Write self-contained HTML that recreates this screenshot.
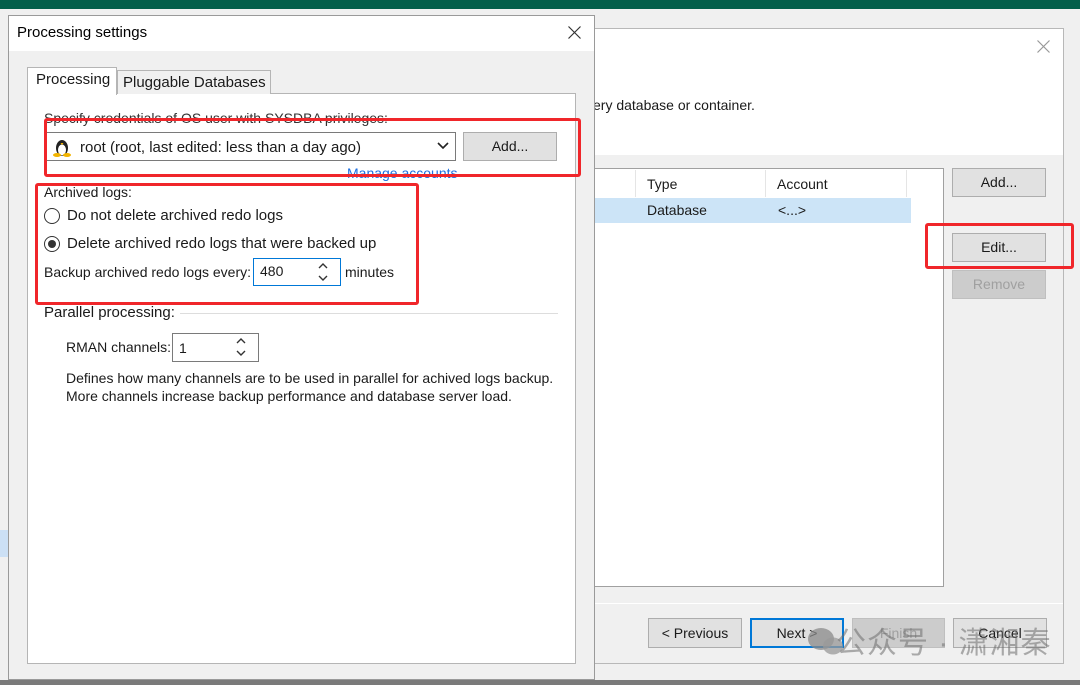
<!DOCTYPE html>
<html><head><meta charset="utf-8"><style>
*{margin:0;padding:0;box-sizing:border-box}
body{width:1080px;height:685px;overflow:hidden;background:#f0f0f0;font-family:"Liberation Sans","Noto Sans CJK SC",sans-serif;font-size:14px;color:#1a1a1a;position:relative}
.a{position:absolute;white-space:nowrap}
.btn{position:absolute;background:#e1e1e1;border:1px solid #adadad;text-align:center;font-size:14px}
.red{position:absolute;border:3px solid #f0262a;border-radius:3px}
</style></head><body>
<div class="a" style="left:0;top:0;width:1080px;height:9px;background:#035f4a"></div>
<div class="a" style="left:0;top:530px;width:8px;height:27px;background:#cce0f5"></div>
<!-- right wizard window -->
<div class="a" style="left:594px;top:28px;width:470px;height:636px;background:#f0f0f0;border:1px solid #b8b8b8"></div>
<div class="a" style="left:594px;top:29px;width:469px;height:126px;background:#fff"></div>
<svg class="a" style="left:1037px;top:40px" width="13" height="13"><path d="M0.5 0.5l12 12M12.5 0.5l-12 12" stroke="#999" stroke-width="1.2"/></svg>
<div class="a" style="left:593px;top:97px">ery database or container.</div>
<div class="a" style="left:594px;top:168px;width:350px;height:419px;background:#fff;border:1px solid #a0a0a0;border-left:none"></div>
<div class="a" style="left:635px;top:170px;width:1px;height:27px;background:#e5e5e5"></div>
<div class="a" style="left:765px;top:170px;width:1px;height:27px;background:#e5e5e5"></div>
<div class="a" style="left:906px;top:170px;width:1px;height:27px;background:#e5e5e5"></div>
<div class="a" style="left:647px;top:176px">Type</div>
<div class="a" style="left:777px;top:176px">Account</div>
<div class="a" style="left:594px;top:198px;width:317px;height:25px;background:#cce4f7"></div>
<div class="a" style="left:647px;top:202px">Database</div>
<div class="a" style="left:778px;top:202px">&lt;...&gt;</div>
<div class="btn" style="left:952px;top:168px;width:94px;height:29px;line-height:27px">Add...</div>
<div class="btn" style="left:952px;top:233px;width:94px;height:29px;line-height:27px">Edit...</div>
<div class="btn" style="left:952px;top:270px;width:94px;height:29px;line-height:27px;color:#a0a0a0;background:#ccc;border-color:#bfbfbf">Remove</div>
<div class="red" style="left:925px;top:223px;width:149px;height:46px"></div>
<div class="a" style="left:594px;top:603px;width:469px;height:1px;background:#fff"></div>
<div class="btn" style="left:648px;top:618px;width:94px;height:30px;line-height:28px">&lt; Previous</div>
<div class="btn" style="left:750px;top:618px;width:94px;height:30px;line-height:26px;border:2px solid #0078d7">Next &gt;</div>
<div class="btn" style="left:852px;top:618px;width:93px;height:30px;line-height:28px;color:#a0a0a0;background:#ccc;border-color:#bfbfbf">Finish</div>
<div class="btn" style="left:953px;top:618px;width:94px;height:30px;line-height:28px">Cancel</div>
<svg class="a" style="left:806px;top:624px" width="40" height="34"><ellipse cx="15" cy="15" rx="13" ry="11" fill="#8a8a8a" opacity=".75"/><ellipse cx="27" cy="22" rx="10" ry="8.5" fill="#9a9a9a" opacity=".75"/></svg>
<div class="a" style="left:836px;top:618px;font-size:30px;letter-spacing:1px;color:rgba(110,110,110,.55)">公众号 · 潇湘秦</div>
<div class="a" style="left:0;top:680px;width:1080px;height:5px;background:#7a7a7a"></div>
<!-- processing dialog -->
<div class="a" style="left:8px;top:15px;width:587px;height:665px;background:#f0f0f0;border:1px solid #9a9a9a"></div>
<div class="a" style="left:9px;top:16px;width:585px;height:35px;background:#fff"></div>
<div class="a" style="left:17px;top:24px;font-size:15px;color:#000">Processing settings</div>
<svg class="a" style="left:568px;top:26px" width="13" height="13"><path d="M0.5 0.5l12 12M12.5 0.5l-12 12" stroke="#333" stroke-width="1.2"/></svg>
<div class="a" style="left:27px;top:93px;width:549px;height:571px;background:#fff;border:1px solid #b5b5b5"></div>
<div class="a" style="left:117px;top:70px;width:154px;height:24px;background:#f0f0f0;border:1px solid #b5b5b5;border-bottom:none;font-size:15px;padding:3px 0 0 5px">Pluggable Databases</div>
<div class="a" style="left:27px;top:67px;width:90px;height:28px;background:#fff;border:1px solid #b5b5b5;border-bottom:none;font-size:15px;padding:3px 0 0 8px">Processing</div>
<div class="a" style="left:44px;top:110px;color:#333">Specify credentials of OS user with SYSDBA privileges:</div>
<div class="a" style="left:46px;top:132px;width:410px;height:29px;background:#fff;border:1px solid #7a7a7a"></div>
<svg class="a" style="left:53px;top:137px" width="18" height="20"><ellipse cx="9" cy="11" rx="6" ry="8" fill="#222"/><ellipse cx="9" cy="13" rx="4" ry="5.5" fill="#fff"/><ellipse cx="4" cy="18" rx="4" ry="2" fill="#f2b400"/><ellipse cx="14" cy="18" rx="4" ry="2" fill="#f2b400"/><path d="M7.5 6h3l-1.5 2z" fill="#f2b400"/></svg>
<div class="a" style="left:80px;top:139px;font-size:15px">root (root, last edited: less than a day ago)</div>
<svg class="a" style="left:437px;top:142px" width="12" height="8"><path d="M1 1l5 5 5-5" stroke="#222" stroke-width="1.6" fill="none"/></svg>
<div class="btn" style="left:463px;top:132px;width:94px;height:29px;line-height:27px">Add...</div>
<div class="a" style="left:347px;top:165px;color:#1e6fe0">Manage accounts</div>
<div class="red" style="left:44px;top:118px;width:537px;height:59px"></div>
<div class="a" style="left:44px;top:184px">Archived logs:</div>
<div class="a" style="left:44px;top:208px;width:16px;height:16px;border:1px solid #333;border-radius:50%;background:#fff"></div>
<div class="a" style="left:67px;top:207px;font-size:15px">Do not delete archived redo logs</div>
<div class="a" style="left:44px;top:236px;width:16px;height:16px;border:1px solid #333;border-radius:50%;background:#fff"></div>
<div class="a" style="left:48px;top:240px;width:8px;height:8px;border-radius:50%;background:#333"></div>
<div class="a" style="left:67px;top:235px;font-size:15px">Delete archived redo logs that were backed up</div>
<div class="a" style="left:44px;top:264px">Backup archived redo logs every:</div>
<div class="a" style="left:253px;top:258px;width:88px;height:28px;background:#fff;border:1px solid #0078d7"></div>
<div class="a" style="left:260px;top:263px">480</div>
<svg class="a" style="left:317px;top:261px" width="12" height="22"><path d="M2 7l4-4 4 4M2 15l4 4 4-4" stroke="#333" stroke-width="1.4" fill="none"/></svg>
<div class="a" style="left:345px;top:264px">minutes</div>
<div class="red" style="left:35px;top:183px;width:384px;height:122px"></div>
<div class="a" style="left:44px;top:304px;font-size:15px">Parallel processing:</div>
<div class="a" style="left:180px;top:313px;width:378px;height:1px;background:#ddd"></div>
<div class="a" style="left:66px;top:339px">RMAN channels:</div>
<div class="a" style="left:172px;top:333px;width:87px;height:29px;background:#fff;border:1px solid #7a7a7a"></div>
<div class="a" style="left:179px;top:340px">1</div>
<svg class="a" style="left:235px;top:336px" width="12" height="22"><path d="M2 7l4-4 4 4M2 15l4 4 4-4" stroke="#333" stroke-width="1.4" fill="none"/></svg>
<div class="a" style="left:66px;top:369px;line-height:18px">Defines how many channels are to be used in parallel for achived logs backup.<br>More channels increase backup performance and database server load.</div>
</body></html>
